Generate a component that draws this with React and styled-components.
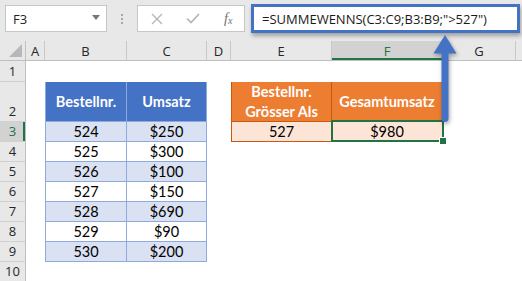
import React from 'react';
import styled, { createGlobalStyle, css } from 'styled-components';

const GlobalStyle = createGlobalStyle`
  html, body {
    margin: 0;
    padding: 0;
    background: #ffffff;
    overflow: hidden;
  }
  * {
    box-sizing: border-box;
  }
`;

const UI_FONT = `"Open Sans", "Noto Sans", sans-serif`;
const CELL_FONT = `Lato, "Open Sans", sans-serif`;

const COLUMNS = [
  { key: 'A', width: 19 },
  { key: 'B', width: 82 },
  { key: 'C', width: 80 },
  { key: 'D', width: 24 },
  { key: 'E', width: 101 },
  { key: 'F', width: 111 },
  { key: 'G', width: 73 },
  { key: 'H', width: 40 },
];

const blue = [
  ['524', '$250'],
  ['525', '$300'],
  ['526', '$100'],
  ['527', '$150'],
  ['528', '$690'],
  ['529', '$90'],
  ['530', '$200'],
];

const ROWS = [
  { n: 1, height: 21, cells: {} },
  {
    n: 2,
    height: 40,
    cells: {
      B: { value: 'Bestellnr.', kind: 'blueHead', first: true },
      C: { value: 'Umsatz', kind: 'blueHead' },
      E: { value: ['Bestellnr.', 'Grösser Als'], kind: 'orangeHead', first: true },
      F: { value: 'Gesamtumsatz', kind: 'orangeHead' },
    },
  },
  ...blue.map(([nr, sum], i) => ({
    n: i + 3,
    height: 20,
    cells: {
      B: { value: nr, kind: i % 2 === 0 ? 'band' : 'plain', first: true },
      C: { value: sum, kind: i % 2 === 0 ? 'band' : 'plain' },
      ...(i === 0
        ? {
            E: { value: '527', kind: 'orangeBody', first: true },
            F: { value: '$980', kind: 'orangeBody', active: true },
          }
        : {}),
    },
  })),
  { n: 10, height: 20, cells: {} },
];

const ACTIVE_ROW = 3;
const ACTIVE_COL = 'F';

const App = () => {
  return (
    <>
      <GlobalStyle />
      <Window>
        <FormulaBar>
          <NameBox>
            <span>F3</span>
            <DropCaret />
          </NameBox>
          <Grip>
            <i />
            <i />
            <i />
          </Grip>
          <ButtonBox>
            <BarIcon>
              <svg width="12" height="12" viewBox="0 0 12 12">
                <path d="M1 1 L11 11 M11 1 L1 11" stroke="#b3b3b3" strokeWidth="1.3" fill="none" />
              </svg>
            </BarIcon>
            <BarIcon>
              <svg width="14" height="11" viewBox="0 0 14 11">
                <path d="M1 5.5 L5 9.5 L13 1" stroke="#b3b3b3" strokeWidth="1.6" fill="none" />
              </svg>
            </BarIcon>
            <FxLabel>
              f<sub>x</sub>
            </FxLabel>
          </ButtonBox>
          <FormulaInput>=SUMMEWENNS(C3:C9;B3:B9;"&gt;527")</FormulaInput>
        </FormulaBar>

        <Sheet>
          <HeaderRow>
            <Corner />
            {COLUMNS.map((c) => (
              <ColHeader key={c.key} $w={c.width} $selected={c.key === ACTIVE_COL}>
                {c.key === 'H' ? '' : c.key}
              </ColHeader>
            ))}
          </HeaderRow>

          {ROWS.map((row) => (
            <Row key={row.n} $h={row.height}>
              <RowHeader $selected={row.n === ACTIVE_ROW}>{row.n}</RowHeader>
              {COLUMNS.map((c) => {
                const cell = row.cells[c.key];
                return (
                  <Cell
                    key={c.key}
                    $w={c.width}
                    $kind={cell ? cell.kind : 'empty'}
                    $first={cell && cell.first}
                    $active={cell && cell.active}
                  >
                    {cell &&
                      (Array.isArray(cell.value) ? (
                        <Stack>
                          {cell.value.map((line) => (
                            <span key={line}>{line}</span>
                          ))}
                        </Stack>
                      ) : (
                        cell.value
                      ))}
                  </Cell>
                );
              })}
            </Row>
          ))}

          <Arrow width="24" height="90" viewBox="0 0 24 90">
            <path
              d="M8.5 18 L15.5 18 L15.5 84 Q15.5 88 12 88 Q8.5 88 8.5 84 Z"
              fill="#4472c4"
            />
            <path d="M0.5 19.5 L12 1 L23.5 19.5 Z" fill="#4472c4" />
          </Arrow>
        </Sheet>
      </Window>
    </>
  );
};

const Window = styled.div`
  width: 522px;
  height: 281px;
  overflow: hidden;
  background: #ffffff;
`;

const FormulaBar = styled.div`
  height: 41px;
  background: #e8e8e8;
  display: flex;
  align-items: flex-start;
  padding: 5px 0 0 5px;
`;

const NameBox = styled.div`
  width: 102px;
  height: 27px;
  background: #ffffff;
  border: 1px solid #c6c6c6;
  display: flex;
  align-items: center;
  justify-content: space-between;
  padding: 0 6px 0 7px;
  font-family: ${UI_FONT};
  font-size: 13px;
  color: #222222;
`;

const DropCaret = styled.span`
  width: 0;
  height: 0;
  border-left: 4px solid transparent;
  border-right: 4px solid transparent;
  border-top: 5px solid #777777;
  margin-bottom: 2px;
`;

const Grip = styled.div`
  width: 30px;
  height: 27px;
  display: flex;
  flex-direction: column;
  align-items: center;
  justify-content: center;
  gap: 2px;

  i {
    display: block;
    width: 2px;
    height: 2px;
    background: #a8a8a8;
  }
`;

const ButtonBox = styled.div`
  width: 108px;
  height: 27px;
  background: #ffffff;
  border: 1px solid #c6c6c6;
  display: flex;
  align-items: center;
  padding: 0 0 0 12px;
  gap: 22px;
`;

const BarIcon = styled.span`
  width: 14px;
  display: flex;
  align-items: center;
  justify-content: center;
`;

const FxLabel = styled.span`
  font-family: "Liberation Serif", serif;
  font-style: italic;
  font-size: 14px;
  color: #707070;
  margin-left: 2px;

  sub {
    font-size: 10px;
    vertical-align: baseline;
    position: relative;
    top: 1px;
  }
`;

const FormulaInput = styled.div`
  margin: -1px 0 0 6px;
  width: 269px;
  height: 29px;
  background: #ffffff;
  border: 3px solid #4472c4;
  box-shadow: 1px 3px 4px rgba(0, 0, 0, 0.3);
  display: flex;
  align-items: center;
  padding-left: 8px;
  font-family: ${UI_FONT};
  font-size: 13px;
  color: #1a1a1a;
  white-space: nowrap;
`;

const Sheet = styled.div`
  position: relative;
`;

const HeaderRow = styled.div`
  display: flex;
  height: 20px;
  background: #e8e8e8;
  border-bottom: 1px solid #bfbfbf;
`;

const Corner = styled.div`
  width: 26px;
  flex: none;
  position: relative;
  border-right: 1px solid #bfbfbf;

  &::after {
    content: '';
    position: absolute;
    right: 3px;
    bottom: 3px;
    width: 0;
    height: 0;
    border-left: 13px solid transparent;
    border-bottom: 13px solid #b8b8b8;
  }
`;

const ColHeader = styled.div`
  width: ${(p) => p.$w}px;
  flex: none;
  display: flex;
  align-items: center;
  justify-content: center;
  border-right: 1px solid #c8c8c8;
  font-family: ${UI_FONT};
  font-size: 13px;
  color: #262626;

  ${(p) =>
    p.$selected &&
    css`
      background: #d2d2d2;
      color: #217346;
      box-shadow: inset 0 -2px 0 #217346;
    `}
`;

const Row = styled.div`
  display: flex;
  height: ${(p) => p.$h}px;
`;

const RowHeader = styled.div`
  width: 26px;
  flex: none;
  display: flex;
  align-items: flex-end;
  justify-content: center;
  padding-bottom: 1px;
  background: #e8e8e8;
  border-right: 1px solid #bfbfbf;
  border-bottom: 1px solid #d0d0d0;
  font-family: ${UI_FONT};
  font-size: 13px;
  color: #262626;

  ${(p) =>
    p.$selected &&
    css`
      background: #d2d2d2;
      color: #217346;
      box-shadow: inset -2px 0 0 #217346;
    `}
`;

const kinds = {
  empty: css``,
  blueHead: css`
    background: #4472c4;
    color: #ffffff;
    font-weight: 700;
    border-right: 1px solid #8eaadb;
    border-bottom: 1px solid #8eaadb;
  `,
  band: css`
    background: #d9e1f2;
    border-right: 1px solid #8eaadb;
    border-bottom: 1px solid #8eaadb;
  `,
  plain: css`
    background: #ffffff;
    border-right: 1px solid #8eaadb;
    border-bottom: 1px solid #8eaadb;
  `,
  orangeHead: css`
    background: #ed7d31;
    color: #ffffff;
    font-weight: 700;
    border-right: 1px solid #c65911;
    border-bottom: 1px solid #c65911;
  `,
  orangeBody: css`
    background: #fce4d6;
    border-right: 1px solid #c65911;
    border-bottom: 1px solid #c65911;
  `,
};

const Cell = styled.div`
  width: ${(p) => p.$w}px;
  flex: none;
  position: relative;
  display: flex;
  align-items: center;
  justify-content: center;
  text-align: center;
  font-family: ${CELL_FONT};
  font-size: 14.5px;
  color: #000000;
  line-height: 20px;

  ${(p) => kinds[p.$kind]}

  ${(p) =>
    p.$first &&
    css`
      border-left: 1px solid ${p.$kind.startsWith('orange') ? '#c65911' : '#8eaadb'};
    `}

  ${(p) =>
    p.$active &&
    css`
      &::after {
        content: '';
        position: absolute;
        top: -2px;
        left: -1px;
        right: -2px;
        bottom: -1px;
        border: 2px solid #217346;
      }
      &::before {
        content: '';
        position: absolute;
        right: -5px;
        bottom: -4px;
        width: 6px;
        height: 6px;
        background: #217346;
        border: 1px solid #ffffff;
        z-index: 1;
      }
    `}
`;

const Stack = styled.div`
  display: flex;
  flex-direction: column;
  line-height: 20px;
`;

const Arrow = styled.svg`
  position: absolute;
  left: 433px;
  top: -7px;
  filter: drop-shadow(1px 2px 2px rgba(0, 0, 0, 0.35));
  overflow: visible;
`;

export default App;
